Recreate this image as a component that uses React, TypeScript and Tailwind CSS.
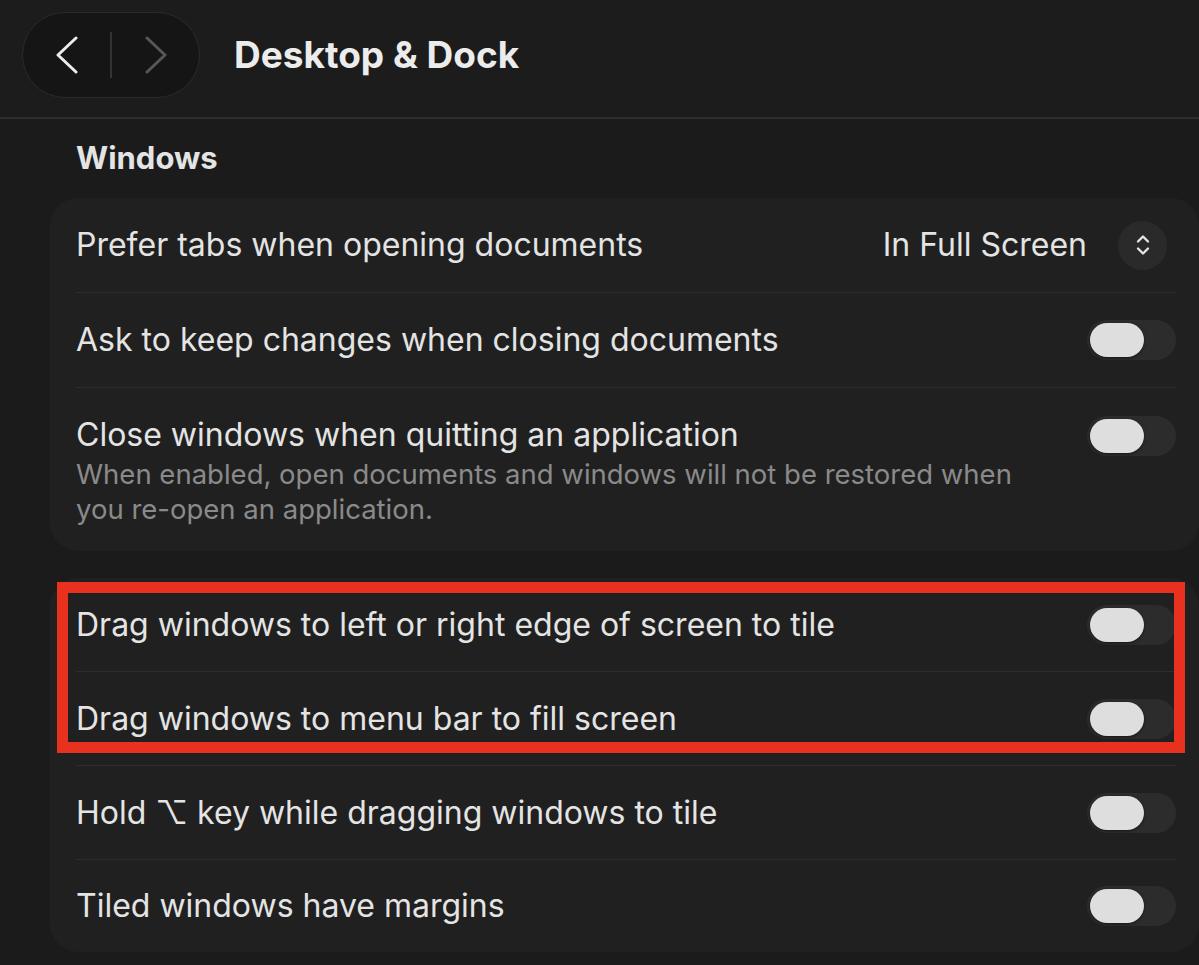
const font = { fontFamily: "Inter, 'Noto Sans', sans-serif" };

const Toggle = () => (
  <div className="relative h-[40px] w-[89px] shrink-0 rounded-full bg-[#2c2c2c]">
    <div className="absolute left-[3px] top-[3px] h-[34px] w-[54px] rounded-full bg-[#dedede] shadow-[0_1px_3px_rgba(0,0,0,0.5)]" />
  </div>
);

const Stepper = () => (
  <div className="flex h-[49px] w-[49px] items-center justify-center rounded-full bg-[#2a2a2a]">
    <svg width="16" height="26" viewBox="0 0 16 26" fill="none">
      <path d="M3 9.5l5-5 5 5M3 16.5l5 5 5-5" stroke="#e4e4e4" strokeWidth="2.4" strokeLinecap="round" strokeLinejoin="round" />
    </svg>
  </div>
);

const Chevron = ({ dir, color }: { dir: "left" | "right"; color: string }) => (
  <svg width="24" height="38" viewBox="0 0 24 38" fill="none">
    <path
      d={dir === "left" ? "M21 2L3 19l18 17" : "M3 2l18 17L3 36"}
      stroke={color}
      strokeWidth="3"
      strokeLinecap="round"
      strokeLinejoin="round"
    />
  </svg>
);

const Row = ({
  label,
  height = "h-[95px]",
  last,
  children,
}: {
  label: string;
  height?: string;
  last?: boolean;
  children?: React.ReactNode;
}) => (
  <div className={`flex ${height} items-center justify-between ${last ? "" : "border-b border-[#2d2d2d]"}`}>
    <span className="text-[32px] text-[#e4e4e4]">{label}</span>
    {children ?? <Toggle />}
  </div>
);

export default function App() {
  return (
    <div className="min-h-[965px] w-[1199px] overflow-hidden bg-[#1b1b1b]" style={font}>
      <header className="flex h-[119px] items-start border-b-2 border-[#2e2e2e] bg-[#1c1c1c] pl-[22px] pt-[12px]">
        <div className="flex h-[86px] w-[178px] items-center rounded-full border border-[#2a2a2a] bg-[#151515]">
          <div className="flex w-[87px] justify-center">
            <Chevron dir="left" color="#ececec" />
          </div>
          <div className="h-[46px] w-[2px] bg-[#333]" />
          <div className="flex w-[87px] justify-center">
            <Chevron dir="right" color="#575757" />
          </div>
        </div>
        <h1 className="ml-[34px] text-[37px] font-bold leading-[86px] text-[#ececec]">Desktop &amp; Dock</h1>
      </header>

      <div className="pl-[50px]">
        <div className="flex h-[79px] items-center pl-[26px]">
          <h2 className="text-[31px] font-bold text-[#e4e4e4]">Windows</h2>
        </div>

        <section className="w-[1149px] rounded-[28px] bg-[#202020] pl-[26px] pr-[23px]">
          <Row label="Prefer tabs when opening documents">
            <div className="flex items-center gap-[31px] pr-[9px]">
              <span className="text-[32px] text-[#e4e4e4]">In Full Screen</span>
              <Stepper />
            </div>
          </Row>
          <Row label="Ask to keep changes when closing documents" />
          <div className="flex items-start justify-between pb-[24px] pt-[27px]">
            <div>
              <p className="text-[32px] leading-[40px] text-[#e4e4e4]">Close windows when quitting an application</p>
              <p className="mt-[2px] text-[27.5px] leading-[35px] text-[#8a8a8a]">
                When enabled, open documents and windows will not be restored when
                <br />
                you re-open an application.
              </p>
            </div>
            <div className="pt-[1px]">
              <Toggle />
            </div>
          </div>
        </section>

        <section className="relative mt-[27px] w-[1149px] rounded-[28px] bg-[#202020] pl-[26px] pr-[23px]">
          <Row label="Drag windows to left or right edge of screen to tile" height="h-[94px]" />
          <Row label="Drag windows to menu bar to fill screen" height="h-[94px]" />
          <Row label="Hold ⌥ key while dragging windows to tile" height="h-[94px]" />
          <Row label="Tiled windows have margins" height="h-[92px]" last />
          {/* highlight around the tiling options */}
          <div className="pointer-events-none absolute left-[7px] top-[4px] h-[171px] w-[1128px] border-[11px] border-[#e8321f]" />
        </section>
      </div>
    </div>
  );
}
